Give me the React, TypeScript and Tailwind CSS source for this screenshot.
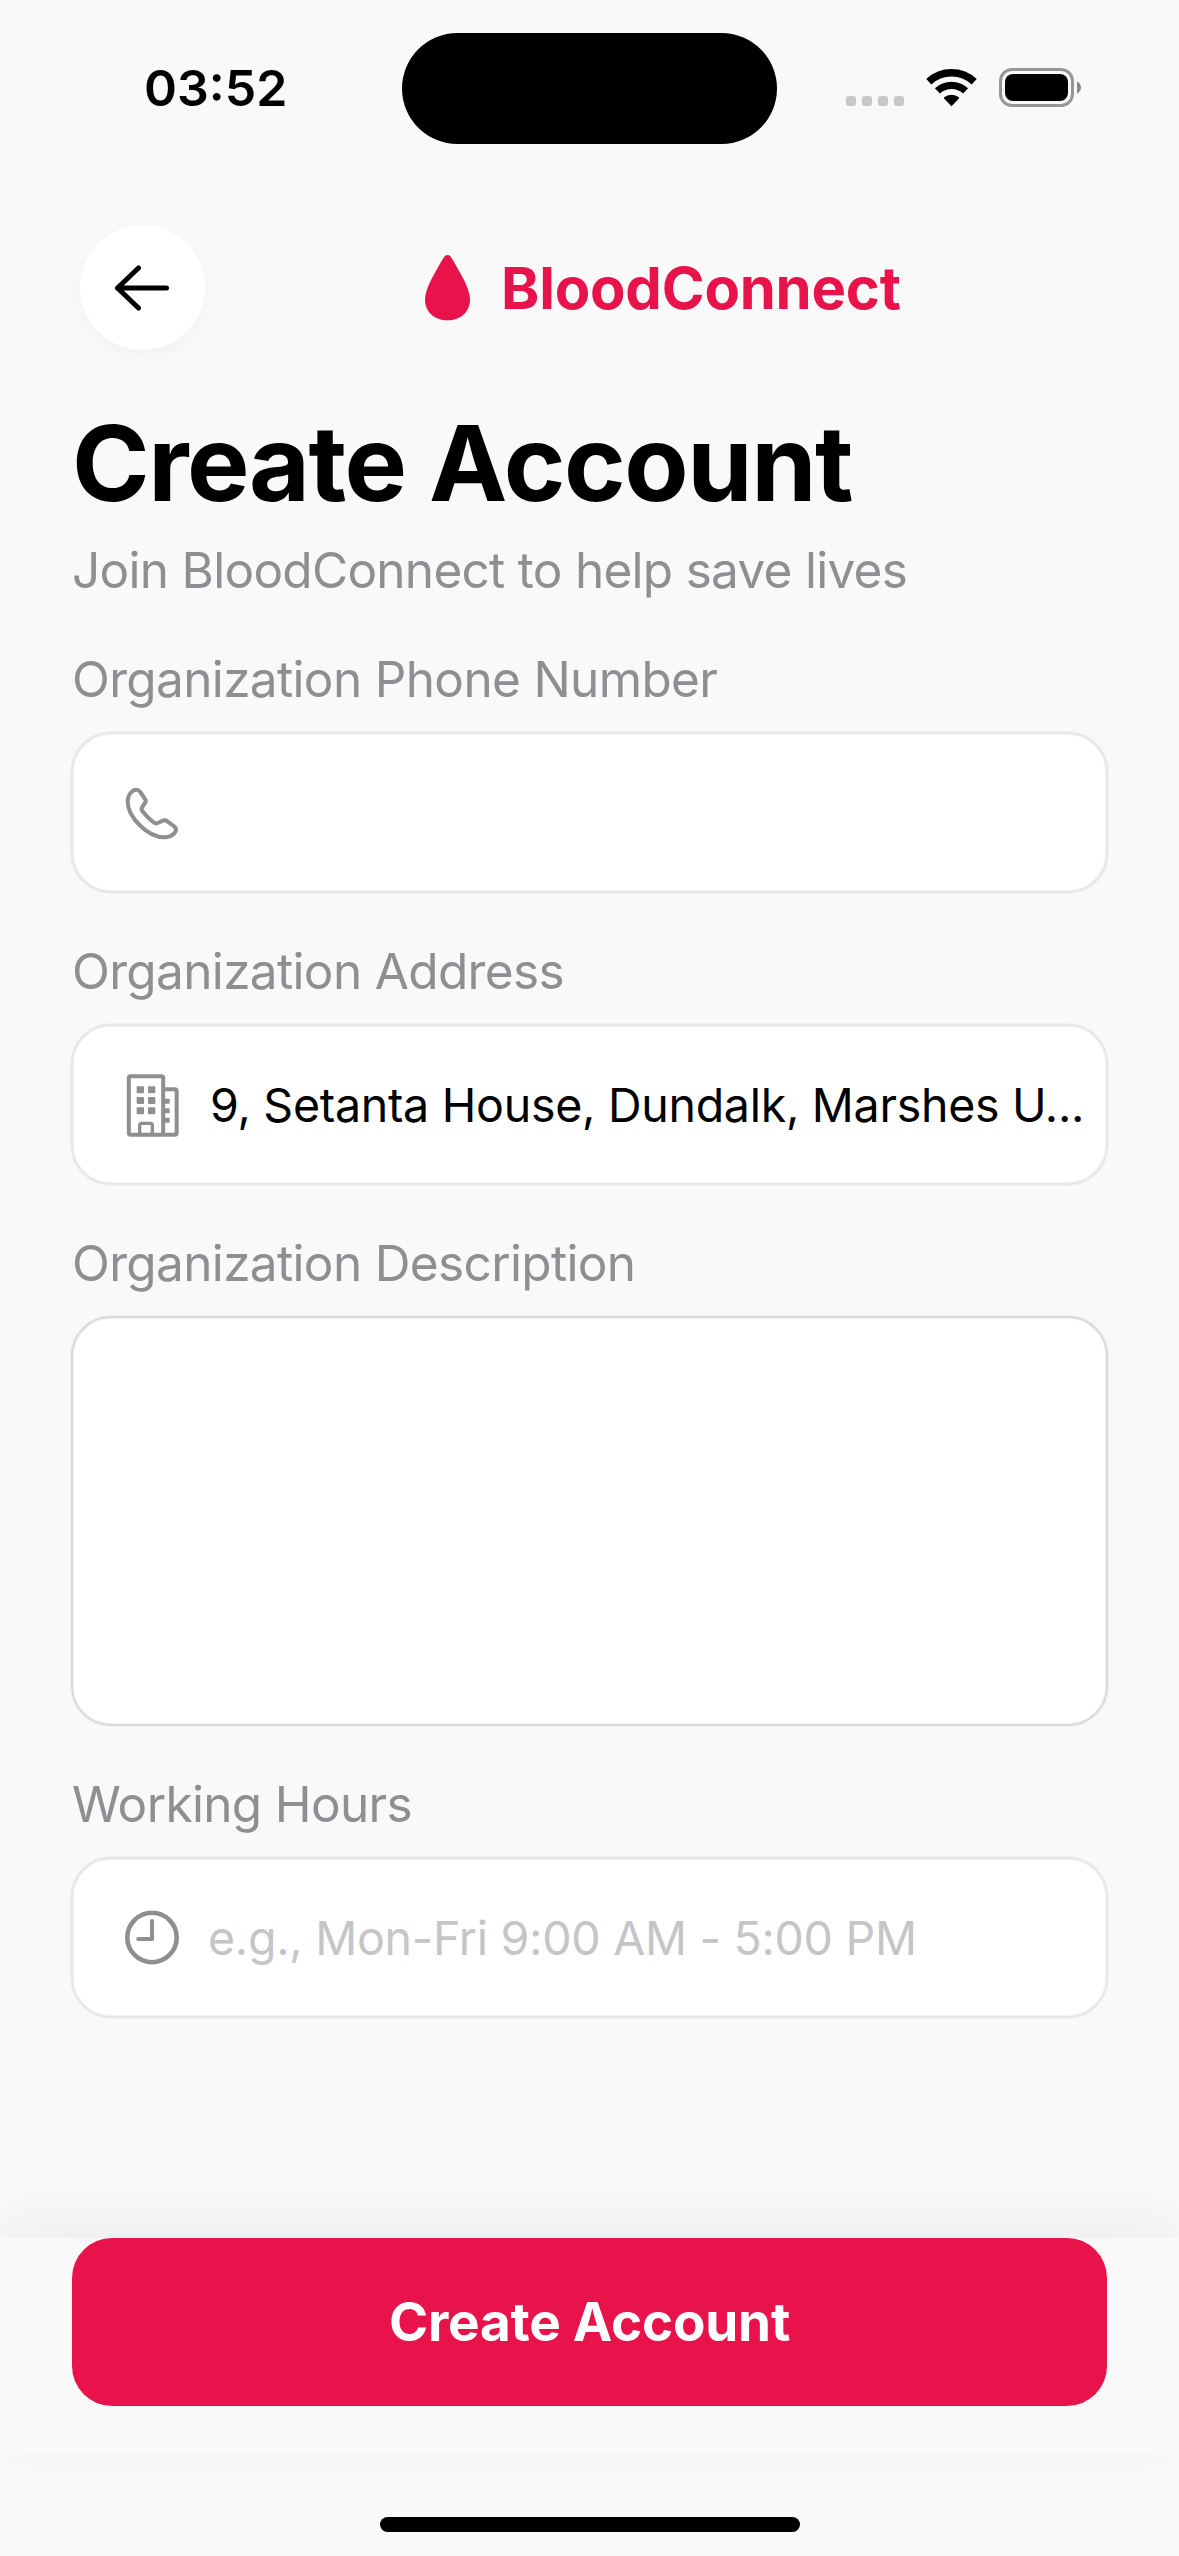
import type { ReactNode } from "react";

function StatusBar() {
  return (
    <div className="relative flex h-[177px] items-center justify-between pb-[2px] pl-[144px] pr-[98px]">
      <span className="text-[50px] font-semibold leading-[60px]">03:52</span>
      <div className="absolute left-[402px] top-[33px] h-[111px] w-[375px] rounded-full bg-black" />
      <div className="flex items-center">
        <div className="mt-[27px] flex gap-[6px]">
          {[0, 1, 2, 3].map((dot) => (
            <span key={dot} className="h-[10px] w-[10px] rounded-[3px] bg-[#c7c7c7]" />
          ))}
        </div>
        <svg className="ml-[22px] h-[38px] w-[51px]" viewBox="0 0 51 38" fill="none">
          <path d="M2.8 12.7A33.3 33.3 0 0 1 48.2 12.7" stroke="black" strokeWidth="7.4" />
          <path d="M11.4 21.9A20.7 20.7 0 0 1 39.6 21.9" stroke="black" strokeWidth="7.3" />
          <path
            d="M25.5 36.2L18.6 28.9A10.6 10.6 0 0 1 32.4 28.9Z"
            fill="black"
            stroke="black"
            strokeWidth="1.4"
            strokeLinejoin="round"
          />
        </svg>
        <svg className="ml-[22px] h-[39px] w-[82px]" viewBox="0 0 82 39" fill="none">
          <rect x="1.5" y="1.5" width="72" height="36" rx="11.5" stroke="#969696" strokeWidth="3" />
          <rect x="6" y="6" width="63" height="27" rx="8" fill="black" />
          <path d="M78 13.5C80.4 14.6 82 16.8 82 19.5S80.4 24.4 78 25.5Z" fill="#888888" />
        </svg>
      </div>
    </div>
  );
}

function Header() {
  return (
    <header className="mt-12 flex h-[125px] items-center pl-20">
      <button className="flex h-[125px] w-[125px] items-center justify-center rounded-full bg-white pr-[2px] shadow-[0_6px_15px_rgba(0,0,0,0.03)]">
        <svg className="h-[46px] w-[56px]" viewBox="0 0 56 46" fill="none">
          <path
            d="M52.5 23H3.5M24.5 3L3.5 23L24.5 43"
            stroke="black"
            strokeWidth="5"
            strokeLinecap="round"
            strokeLinejoin="round"
          />
        </svg>
      </button>
      <div className="ml-[220px] flex items-center">
        <svg className="h-[66px] w-[45px]" viewBox="0 0 45 66">
          <path
            d="M22.5 0C24 0 25.2 .9 26 2.2C30 8.5 35 17 39.5 26C43 33.5 45 39.5 45 44.5C45 57 35.5 65.3 22.5 65.3S0 57 0 44.5C0 39.5 2 33.5 5.5 26C10 17 15 8.5 19 2.2C19.8 .9 21 0 22.5 0Z"
            fill="#e8134b"
          />
        </svg>
        <span className="ml-[31px] text-[58px] font-bold leading-[70px] tracking-[-0.22px] text-[#e8134b]">
          BloodConnect
        </span>
      </div>
    </header>
  );
}

function PhoneIcon() {
  return (
    <svg className="h-[54px] w-[54px] shrink-0" viewBox="195 197 162 162" fill="none">
      <path
        d="M229 208C216 208 203 224 203 243C203 292 264 351 314 351C334 351 348 338 348 327C348 322 345 320 341 317L322 303C317 299 312 299 306 302L293 308C288 311 285 309 281 306C268 297 256 284 247 272C244 268 243 266 246 261L255 248C258 244 258 240 255 236L240 214C237 210 234 208 229 208Z"
        stroke="#8e8e93"
        strokeWidth="12"
        strokeLinejoin="round"
      />
    </svg>
  );
}

function BuildingIcon() {
  return (
    <svg className="h-[66px] w-[54px] shrink-0" viewBox="0 0 162 198" fill="none">
      <g stroke="#8e8e93" strokeWidth="12">
        <rect x="11.5" y="13" width="103" height="175" rx="5" />
        <path d="M115 52H149Q155 52 155 58V182Q155 188 149 188H115" />
        <path d="M44 188V160Q44 154 50 154H76Q82 154 82 160V188" strokeWidth="10" />
      </g>
      <g fill="#8e8e93">
        <rect x="35" y="43" width="22" height="21" rx="3" />
        <rect x="69" y="43" width="22" height="21" rx="3" />
        <rect x="35" y="75" width="22" height="21" rx="3" />
        <rect x="69" y="75" width="22" height="21" rx="3" />
        <rect x="35" y="106" width="22" height="21" rx="3" />
        <rect x="69" y="106" width="22" height="21" rx="3" />
        <rect x="118" y="80" width="16" height="15" rx="2" />
        <rect x="118" y="109" width="16" height="15" rx="2" />
        <rect x="118" y="137" width="16" height="15" rx="2" />
      </g>
    </svg>
  );
}

function ClockIcon() {
  return (
    <svg className="h-[55px] w-[54px] shrink-0" viewBox="0 0 54 55" fill="none">
      <circle cx="27" cy="27.5" r="24.7" stroke="#8e8e93" strokeWidth="4.6" />
      <path
        d="M27 11V29H13.2"
        stroke="#8e8e93"
        strokeWidth="4"
        strokeLinecap="round"
        strokeLinejoin="round"
      />
    </svg>
  );
}

type FieldProps = {
  label: string;
  className: string;
  children?: ReactNode;
};

function Field({ label, className, children }: FieldProps) {
  return (
    <section>
      <h2 className="text-[49.5px] leading-[60px] tracking-[-0.65px] text-[#8e8e93]">{label}</h2>
      <div
        className={`-mx-px mt-[23px] flex items-center overflow-hidden whitespace-nowrap rounded-[40px] border-2 bg-white ${className}`}
      >
        {children}
      </div>
    </section>
  );
}

const inputBox =
  "h-[161px] gap-[31px] border-[#e6e6e6] pl-[52px] shadow-[0_0_0_1px_#f1f1f1,inset_0_0_0_1px_#f3f3f3]";
const textAreaBox =
  "h-[410px] border-[#dadada] shadow-[0_0_0_1px_#efefef,inset_0_0_0_1px_#f3f3f3]";

export default function App() {
  return (
    <div className="flex h-[2556px] w-[1179px] flex-col overflow-hidden bg-[#f9f9f9] font-['Inter',sans-serif] text-black">
      <StatusBar />
      <Header />

      <main className="flex-1 px-[72px]">
        <h1 className="mt-[53px] text-[105px] font-bold leading-[120px] tracking-[-1.45px]">
          Create Account
        </h1>
        <p className="mt-[17px] text-[49.5px] leading-[60px] tracking-[-0.72px] text-[#8e8e93]">
          Join BloodConnect to help save lives
        </p>

        <div className="mt-[49px] flex flex-col gap-12">
          <Field label="Organization Phone Number" className={inputBox}>
            <PhoneIcon />
          </Field>
          <Field label="Organization Address" className={inputBox}>
            <BuildingIcon />
            <span className="text-[46.5px] leading-[60px] tracking-[-0.27px]">
              9, Setanta House, Dundalk, Marshes U...
            </span>
          </Field>
          <Field label="Organization Description" className={textAreaBox} />
          <Field label="Working Hours" className={inputBox}>
            <ClockIcon />
            <span className="-ml-[2px] text-[46.5px] leading-[60px] tracking-[-0.27px] text-[#c5c5c7]">
              e.g., Mon-Fri 9:00 AM - 5:00 PM
            </span>
          </Field>
        </div>
      </main>

      <footer className="h-[216px] bg-[#f9f9f9] px-[72px] shadow-[0_-15px_60px_rgba(0,0,0,0.05)]">
        <button className="flex h-[168px] w-full items-center justify-center rounded-[40px] bg-[#e8134b] text-[53px] font-[660] leading-[60px] tracking-[-0.2px] text-white">
          Create Account
        </button>
      </footer>
      <div className="flex h-[102px] justify-center pt-[63px]">
        <div className="h-[15px] w-[420px] rounded-full bg-black" />
      </div>
    </div>
  );
}
